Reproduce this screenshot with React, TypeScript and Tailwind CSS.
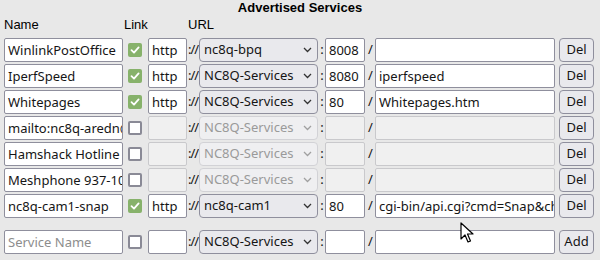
import React from 'react';

type Row = {
  name: string;
  link: boolean;
  proto: string;
  host: string;
  port: string;
  path: string;
};

const rows: Row[] = [
  { name: 'WinlinkPostOffice', link: true, proto: 'http', host: 'nc8q-bpq', port: '8008', path: '' },
  { name: 'IperfSpeed', link: true, proto: 'http', host: 'NC8Q-Services', port: '8080', path: 'iperfspeed' },
  { name: 'Whitepages', link: true, proto: 'http', host: 'NC8Q-Services', port: '80', path: 'Whitepages.htm' },
  { name: 'mailto:nc8q-aredn@gmail.com', link: false, proto: '', host: 'NC8Q-Services', port: '', path: '' },
  { name: 'Hamshack Hotline', link: false, proto: '', host: 'NC8Q-Services', port: '', path: '' },
  { name: 'Meshphone 937-1000', link: false, proto: '', host: 'NC8Q-Services', port: '', path: '' },
  { name: 'nc8q-cam1-snap', link: true, proto: 'http', host: 'nc8q-cam1', port: '80', path: 'cgi-bin/api.cgi?cmd=Snap&channel=0' },
];

const font = { fontFamily: '"Noto Sans", "DejaVu Sans", sans-serif' };
const arial = { fontFamily: '"Liberation Sans", Arial, sans-serif' };

const Field = ({ value, width, disabled, placeholder }: { value: string; width: string; disabled?: boolean; placeholder?: string }) => (
  <div
    className={`${width} h-[24px] shrink-0 overflow-hidden whitespace-nowrap rounded-[2px] border pl-[3px] text-[13px] leading-[22px] ${
      disabled ? 'bg-[#f0f0f0] border-[#c9c9cc] text-[#8a8a8a]' : 'bg-white border-[#8f8f9d] text-[#151515]'
    }`}
  >
    {value ? value : <span className="text-[#8d8d8d]">{placeholder}</span>}
  </div>
);

const Check = ({ on }: { on: boolean }) => (
  <div className="w-[25px] shrink-0 flex items-center">
    {on ? (
      <div className="ml-[5px] w-[14px] h-[14px] rounded-[2px] bg-[#87b26b] flex items-center justify-center">
        <svg width="10" height="10" viewBox="0 0 10 10">
          <path d="M1.5 5.2 L4 7.6 L8.6 2.4" fill="none" stroke="white" strokeWidth="1.8" strokeLinecap="round" strokeLinejoin="round" />
        </svg>
      </div>
    ) : (
      <div className="ml-[5px] w-[14px] h-[14px] rounded-[2px] bg-white border-2 border-[#8a8a96]" />
    )}
  </div>
);

const Select = ({ value, disabled }: { value: string; disabled?: boolean }) => (
  <div
    className={`w-[119px] h-[24px] shrink-0 flex items-center justify-between rounded-[4px] border pl-[4px] pr-[5px] text-[13px] ${
      disabled ? 'bg-[#efeff1] border-[#d2d2d6] text-[#9a9a9a]' : 'bg-[#e9e9ed] border-[#8f8f9d] text-[#151515]'
    }`}
  >
    <span className="whitespace-nowrap">{value}</span>
    <svg width="9" height="6" viewBox="0 0 9 6">
      <path d="M1 1 L4.5 4.5 L8 1" fill="none" stroke={disabled ? '#a0a0a0' : '#333'} strokeWidth="1.3" />
    </svg>
  </div>
);

const Sep = ({ text, width }: { text: string; width: string }) => (
  <span className={`${width} shrink-0 whitespace-nowrap text-center text-[13px] tracking-[-1px] text-[#151515]`}>{text}</span>
);

const Btn = ({ label }: { label: string }) => (
  <div className="ml-[4px] w-[35px] h-[24px] shrink-0 flex items-center justify-center rounded-[4px] border border-[#8f8f9d] bg-[#e9e9ed] text-[13px] text-[#151515]">
    {label}
  </div>
);

export default function App() {
  return (
    <div className="relative w-[600px] h-[260px] bg-[#e8e8e8] overflow-hidden" style={font}>
      <div className="h-[16px] pt-[1px] text-center text-[13px] font-bold text-black leading-[14px]" style={arial}>
        Advertised Services
      </div>
      <div className="flex h-[16px] items-end px-[4px] text-[13px] text-black leading-[15px]" style={arial}>
        <span className="w-[120px]">Name</span>
        <span className="w-[64px]">Link</span>
        <span>URL</span>
      </div>
      <div className="mt-[6px] flex flex-col gap-[2px] px-[4px]">
        {rows.map(r => (
          <div key={r.name} className="flex items-center h-[24px]">
            <Field value={r.name} width="w-[119px]" />
            <Check on={r.link} />
            <Field value={r.proto} width="w-[39px]" disabled={!r.link} />
            <Sep text="://" width="w-[12px]" />
            <Select value={r.host} disabled={!r.link} />
            <Sep text=":" width="w-[7px]" />
            <Field value={r.port} width="w-[40px]" disabled={!r.link} />
            <Sep text="/" width="w-[10px]" />
            <Field value={r.path} width="w-[180px]" disabled={!r.link} />
            <Btn label="Del" />
          </div>
        ))}
        <div className="mt-[10px] flex items-center h-[24px]">
          <Field value="" placeholder="Service Name" width="w-[119px]" />
          <Check on={false} />
          <Field value="" width="w-[39px]" />
          <Sep text="://" width="w-[12px]" />
          <Select value="NC8Q-Services" />
          <Sep text=":" width="w-[7px]" />
          <Field value="" width="w-[40px]" />
          <Sep text="/" width="w-[10px]" />
          <Field value="" width="w-[180px]" />
          <Btn label="Add" />
        </div>
      </div>
      {/* mouse pointer */}
      <svg className="absolute left-[460px] top-[222px]" width="14" height="22" viewBox="0 0 14 22">
        <path d="M1 1 L1 17 L5 13 L8 20 L10.5 19 L7.5 12 L13 12 Z" fill="white" stroke="black" strokeWidth="1.2" strokeLinejoin="round" />
      </svg>
    </div>
  );
}
